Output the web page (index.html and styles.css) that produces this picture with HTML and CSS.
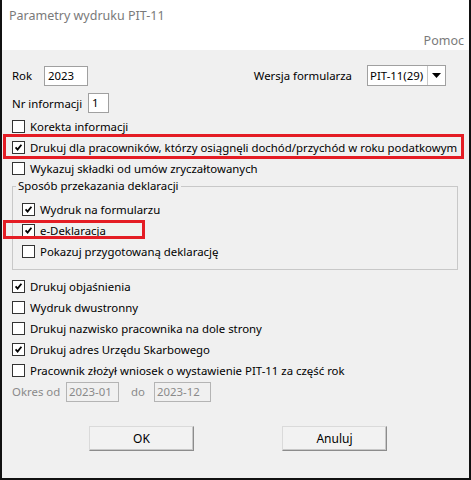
FILE: index.html
```html
<!DOCTYPE html>
<html lang="pl">
<head>
    <meta charset="UTF-8">
    <meta name="viewport" content="width=device-width, initial-scale=1.0">
    <title>Parametry wydruku PIT-11</title>
    <link rel="stylesheet" href="styles.css">
</head>
<body>
    <div class="window">
        <div class="titlebar">
            <div class="title">Parametry wydruku PIT-11</div>
            <div class="menu">Pomoc</div>
        </div>

        <div class="content">
            <div class="row row-top">
                <span class="lbl lbl-rok">Rok</span>
                <span class="input input-rok">2023</span>
                <span class="lbl lbl-wersja">Wersja formularza</span>
                <span class="select">
                    <span class="select-val">PIT-11(29)</span>
                    <span class="select-btn"><svg width="9" height="5" viewBox="0 0 9 5"><path d="M0 0H9L4.5 5Z" fill="#000"/></svg></span>
                </span>
            </div>
            <div class="row row-nr">
                <span class="lbl lbl-nr">Nr informacji</span>
                <span class="input input-nr">1</span>
            </div>

            <div class="checks checks-first">
                <div class="check"><span class="box"></span>Korekta informacji</div>
                <div class="check checked marked mark-wide"><span class="box"><svg width="11" height="11" viewBox="0 0 11 11"><path d="M2.6 5.4L4.6 7.6L8.4 2.8" stroke="#000" stroke-width="1.8" fill="none"/></svg></span>Drukuj dla pracowników, którzy osiągnęli dochód/przychód w roku podatkowym</div>
                <div class="check"><span class="box"></span>Wykazuj składki od umów zryczałtowanych</div>
            </div>

            <fieldset class="group">
                <legend>Sposób przekazania deklaracji</legend>
                <div class="check checked"><span class="box"><svg width="11" height="11" viewBox="0 0 11 11"><path d="M2.6 5.4L4.6 7.6L8.4 2.8" stroke="#000" stroke-width="1.8" fill="none"/></svg></span>Wydruk na formularzu</div>
                <div class="check checked marked mark-short"><span class="box"><svg width="11" height="11" viewBox="0 0 11 11"><path d="M2.6 5.4L4.6 7.6L8.4 2.8" stroke="#000" stroke-width="1.8" fill="none"/></svg></span>e-Deklaracja</div>
                <div class="check"><span class="box"></span>Pokazuj przygotowaną deklarację</div>
            </fieldset>

            <div class="checks checks-second">
                <div class="check checked"><span class="box"><svg width="11" height="11" viewBox="0 0 11 11"><path d="M2.6 5.4L4.6 7.6L8.4 2.8" stroke="#000" stroke-width="1.8" fill="none"/></svg></span>Drukuj objaśnienia</div>
                <div class="check"><span class="box"></span>Wydruk dwustronny</div>
                <div class="check"><span class="box"></span>Drukuj nazwisko pracownika na dole strony</div>
                <div class="check checked"><span class="box"><svg width="11" height="11" viewBox="0 0 11 11"><path d="M2.6 5.4L4.6 7.6L8.4 2.8" stroke="#000" stroke-width="1.8" fill="none"/></svg></span>Drukuj adres Urzędu Skarbowego</div>
                <div class="check"><span class="box"></span>Pracownik złożył wniosek o wystawienie PIT-11 za część rok</div>
                <div class="row okres">
                    <span class="lbl lbl-od">Okres od</span>
                    <span class="input input-off input-od">2023-01</span>
                    <span class="lbl lbl-do">do</span>
                    <span class="input input-off input-do">2023-12</span>
                </div>
            </div>

            <div class="buttons">
                <button class="btn">OK</button>
                <button class="btn">Anuluj</button>
            </div>
        </div>
    </div>
</body>
</html>
```

FILE: styles.css
```css
body {
    margin: 0;
    font-family: "Noto Sans", "Open Sans", sans-serif;
    font-size: 11.4px;
    color: #000;
}
.window {
    width: 471px;
    height: 480px;
    box-sizing: border-box;
    border: 2px solid #111;
    border-top: none;
    background-color: #f0f0f0;
    display: flex;
    flex-direction: column;
}
.titlebar {
    height: 50px;
    background-color: #fff;
    display: flex;
    flex-direction: column;
}
.title {
    padding: 7px 0 0 7px;
    font-size: 12.5px;
    color: #7a7a7a;
}
.menu {
    margin-top: auto;
    text-align: right;
    padding: 0 5px 1px 0;
    font-size: 12.5px;
    color: #7a7a7a;
}
.content {
    padding: 15px 10px 0 10px;
}
.row {
    display: flex;
    align-items: center;
    white-space: nowrap;
}
.row-top {
    height: 21px;
    margin-right: 13px;
}
.row-nr {
    height: 20px;
    margin-top: 7px;
}
.lbl-rok {
    width: 32px;
}
.lbl-nr {
    width: 76px;
}
.lbl-wersja {
    margin-left: auto;
    margin-right: 15px;
}
.input {
    box-sizing: border-box;
    height: 20px;
    border: 1px solid #a0a0a0;
    background-color: #fff;
    padding: 0 3px;
    line-height: 18px;
}
.input-rok {
    width: 44px;
}
.input-nr {
    width: 21px;
}
.select {
    box-sizing: border-box;
    width: 79px;
    height: 21px;
    border: 1px solid #a0a0a0;
    background-color: #fff;
    display: flex;
}
.select-val {
    flex: 1;
    padding-left: 2px;
    line-height: 19px;
}
.select-btn {
    width: 17px;
    border-left: 1px solid #c8c8c8;
    display: flex;
    align-items: center;
    justify-content: center;
}
.checks-first {
    margin-top: 3px;
}
.check {
    display: flex;
    align-items: center;
    gap: 5px;
    height: 21px;
    white-space: nowrap;
}
.box {
    box-sizing: border-box;
    width: 13px;
    height: 13px;
    border: 1px solid #333;
    background-color: #fff;
    display: flex;
    align-items: center;
    justify-content: center;
    flex-shrink: 0;
}
.marked {
    position: relative;
}
.marked::after {
    content: "";
    position: absolute;
    border: 3px solid #e41c24;
}
.mark-wide::after {
    left: -9px;
    right: -5px;
    top: -3px;
    bottom: -1px;
}
.mark-short::after {
    left: -19px;
    width: 136px;
    top: 0;
    bottom: 2px;
}
.group {
    margin: 0 1px 0 0;
    padding: 6px 9px 7px 9px;
    border: 1px solid #c8c8c8;
}
.group legend {
    margin-left: -6px;
    padding: 0 2px;
    line-height: 14px;
}
.checks-second {
    margin-top: 6px;
}
.okres {
    height: 21px;
    color: #8a8a8a;
}
.lbl-od {
    width: 54px;
}
.lbl-do {
    margin: 0 9px 0 12px;
}
.input-off {
    background-color: #f0f0f0;
    color: #8a8a8a;
    border-color: #b4b4b4;
    padding: 0 2px;
}
.input-od {
    width: 53px;
}
.input-do {
    width: 57px;
}
.buttons {
    display: flex;
    gap: 88px;
    margin-top: 24px;
    padding-left: 77px;
}
.btn {
    width: 105px;
    height: 25px;
    font-family: inherit;
    font-size: 12px;
    background-color: #f2f2f2;
    border: 1px solid;
    border-color: #dadada #8c8c8c #8c8c8c #dadada;
    box-shadow: inset -1px -1px 0 #c8c8c8;
    padding: 0;
}
```
